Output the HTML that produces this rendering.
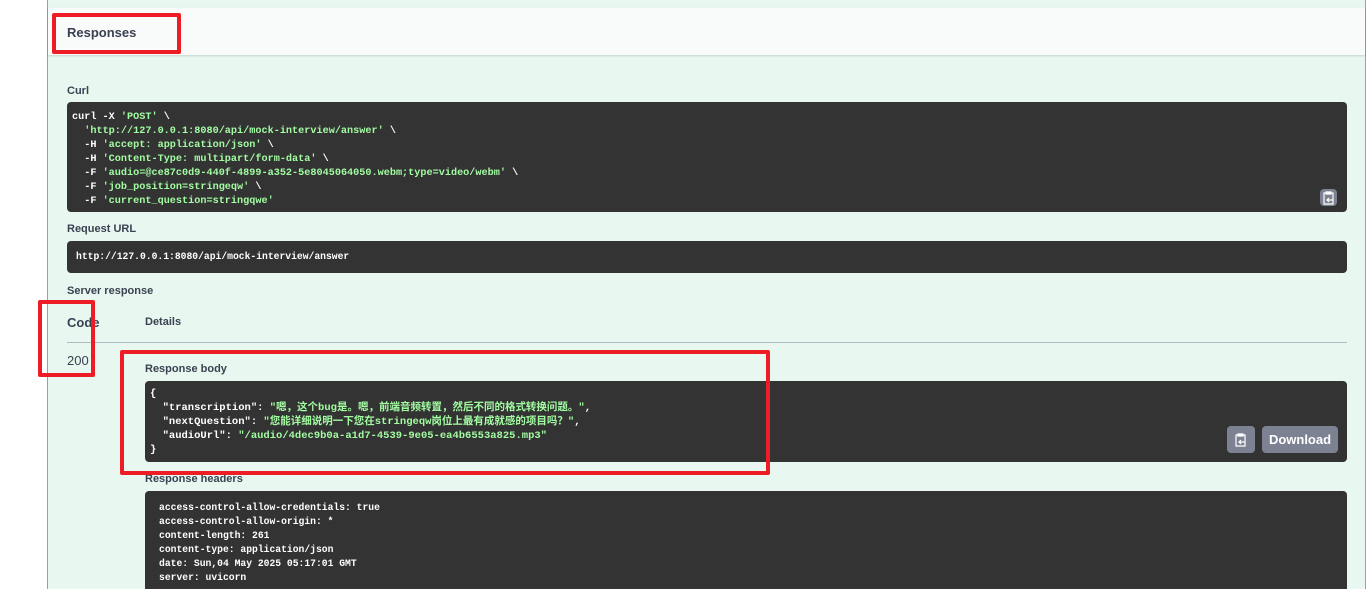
<!DOCTYPE html>
<html><head><meta charset="utf-8"><style>
*{margin:0;padding:0;box-sizing:border-box}
html,body{width:1370px;height:589px;overflow:hidden}
body{background:#fff;font-family:"Liberation Sans","Noto Sans CJK SC",sans-serif;position:relative}
.wrap{position:absolute;left:47px;top:0;width:1319px;height:589px;background:#e8f7f0;border-left:1px solid #49cc90;border-right:1px solid #49cc90}
.hdr{position:absolute;left:48px;top:8px;width:1317px;height:47px;background:#f8fbfa;box-shadow:0 1px 2px rgba(0,0,0,.15)}
.abs{position:absolute}
.lbl{font-size:11px;font-weight:bold;color:#3b4151}
.dark{background:#333;border-radius:4px;position:absolute;overflow:hidden}
pre{font-family:"Liberation Mono","Noto Sans CJK SC",monospace;font-size:10.5px;line-height:14px;color:#fff;white-space:pre}
.hd{font-family:"Liberation Mono",monospace;font-size:9.7px;font-weight:bold}
.g{color:#a2fca2}
.red{position:absolute;border:4px solid #ee1c25;border-radius:2px}
.btn{position:absolute;background:#7d8293;border-radius:4px}
.btn svg{position:absolute}
</style></head><body>
<div class="wrap"></div>
<div class="hdr"></div>
<div class="abs lbl" style="left:67px;top:25px;font-size:13px">Responses</div>
<div class="abs lbl" style="left:67px;top:85px">Curl</div>
<div class="dark" style="left:67px;top:102px;width:1280px;height:110px">
<pre style="position:absolute;left:5px;top:8px;font-weight:bold;transform:scaleX(0.97);transform-origin:left top">curl -X <span class="g">'POST'</span> \
  <span class="g">'http://127.0.0.1:8080/api/mock-interview/answer'</span> \
  -H <span class="g">'accept: application/json'</span> \
  -H <span class="g">'Content-Type: multipart/form-data'</span> \
  -F <span class="g">'audio=@ce87c0d9-440f-4899-a352-5e8045064050.webm;type=video/webm'</span> \
  -F <span class="g">'job_position=stringeqw'</span> \
  -F <span class="g">'current_question=stringqwe'</span></pre>
<div class="btn" style="left:1253px;top:87px;width:17px;height:17px"><svg style="left:2px;top:1px" width="13" height="15" viewBox="0 0 13 15"><path d="M4 2h5v2H4z M2 3h9v11H2z" fill="none" stroke="#fff" stroke-width="1.2"/><path d="M5 10h6M7 8l-2 2 2 2" fill="none" stroke="#fff" stroke-width="1.2"/></svg></div>
</div>
<div class="abs lbl" style="left:67px;top:223px">Request URL</div>
<div class="dark" style="left:67px;top:241px;width:1280px;height:32px">
<pre class="hd" style="position:absolute;left:9px;top:9px">http://127.0.0.1:8080/api/mock-interview/answer</pre></div>
<div class="abs lbl" style="left:67px;top:285px">Server response</div>
<div class="abs" style="left:67px;top:315px;font-size:13px;font-weight:bold;color:#3b4151">Code</div>
<div class="abs lbl" style="left:145px;top:316px">Details</div>
<div class="abs" style="left:67px;top:342px;width:1280px;height:1px;background:#b5bac0"></div>
<div class="abs" style="left:67px;top:353px;font-size:13px;color:#3b4151">200</div>
<div class="abs lbl" style="left:145px;top:363px">Response body</div>
<div class="dark" style="left:145px;top:381px;width:1202px;height:81px">
<pre style="position:absolute;left:5px;top:6px;font-weight:bold">{
  "transcription": <span class="g">"嗯，这个bug是。嗯，前端音频转置，然后不同的格式转换问题。"</span>,
  "nextQuestion": <span class="g">"您能详细说明一下您在stringeqw岗位上最有成就感的项目吗？"</span>,
  "audioUrl": <span class="g">"/audio/4dec9b0a-a1d7-4539-9e05-ea4b6553a825.mp3"</span>
}</pre>
<div class="btn" style="left:1082px;top:45px;width:28px;height:27px"><svg style="left:7px;top:6px" width="13" height="15" viewBox="0 0 13 15"><path d="M4 2h5v2H4z M2 3h9v11H2z" fill="none" stroke="#fff" stroke-width="1.2"/><path d="M5 10h6M7 8l-2 2 2 2" fill="none" stroke="#fff" stroke-width="1.2"/></svg></div>
<div class="btn" style="left:1117px;top:45px;width:76px;height:27px;color:#fff;font-size:13px;font-weight:bold;line-height:27px;text-align:center">Download</div>
</div>
<div class="abs lbl" style="left:145px;top:473px">Response headers</div>
<div class="dark" style="left:145px;top:491px;width:1202px;height:110px">
<pre class="hd" style="position:absolute;left:14px;top:10px">access-control-allow-credentials: true
access-control-allow-origin: *
content-length: 261
content-type: application/json
date: Sun,04 May 2025 05:17:01 GMT
server: uvicorn</pre></div>
<div class="red" style="left:52px;top:13px;width:129px;height:41px"></div>
<div class="red" style="left:38px;top:300px;width:57px;height:77px"></div>
<div class="red" style="left:120px;top:350px;width:650px;height:125px"></div>
</body></html>
